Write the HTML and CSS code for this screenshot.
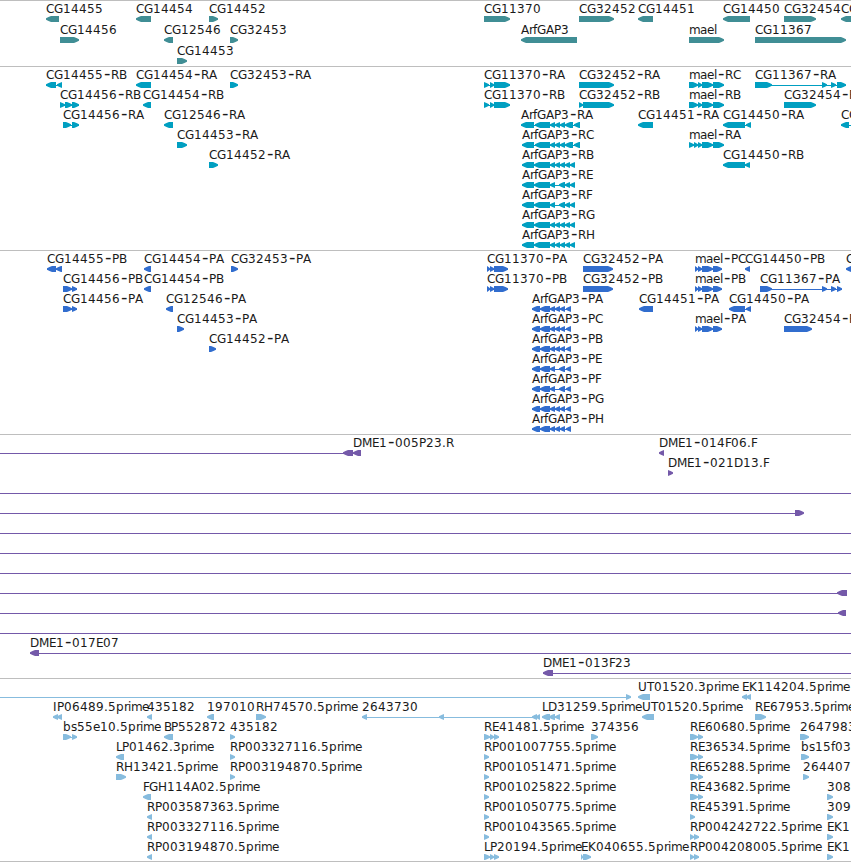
FILE: index.html
```html
<!DOCTYPE html>
<html lang="en">
  <head>
    <meta charset="UTF-8" />
    <meta name="viewport" content="width=device-width, initial-scale=1.0" />
    <title>Genome tracks</title>
    <link rel="stylesheet" href="styles.css">
  </head>
  <body>
    <main class="browser">
      <section class="track track--gene" data-track="gene"></section>
      <section class="track track--transcript" data-track="transcript"></section>
      <section class="track track--protein" data-track="protein"></section>
      <section class="track track--bac" data-track="bac"></section>
      <section class="track track--est" data-track="est"></section>
    </main>
    <script src="tracks.js"></script>
  </body>
</html>
```
FILE: styles.css
```css
:root {
  --color-line: #bebebe;
  --color-gene: #408e95;
  --color-transcript: #009fc1;
  --color-protein: #316dce;
  --color-bac: #7459a9;
  --color-est: #87bcde;
}
body {
  margin: 0;
  background: #fff;
  overflow: hidden;
}
.browser {
  display: flex;
  flex-direction: column;
  width: 851px;
}
.track {
  box-sizing: border-box;
  height: 184px;
  border-top: 1px solid var(--color-line);
  overflow: hidden;
}
.track svg {
  display: block;
  width: 100%;
  height: 100%;
}
.track--gene {
  height: 66px;
  fill: var(--color-gene);
}
.track--transcript {
  fill: var(--color-transcript);
}
.track--protein {
  fill: var(--color-protein);
}
.track--bac {
  height: 244px;
  fill: var(--color-bac);
}
.track--est {
  border-bottom: 1px solid var(--color-line);
  fill: var(--color-est);
}
.label {
  font-family: "DejaVu Sans", sans-serif;
  font-size: 12px;
  fill: #1a1a1a;
}
.label__dash {
  font-size: 18px;
}
```
FILE: tracks.js
```js
(function () {
  var SVG_NS = "http://www.w3.org/2000/svg";
  var VIEW_END = 851;

  // label advances, anything missing is 8px wide
  var ADVANCE = {
    G: 9, D: 9, H: 9, U: 9, M: 10, P: 7, B: 7, E: 7, F: 6, L: 6, T: 7, I: 4,
    a: 7, e: 7, f: 4, i: 3, l: 3, m: 11, r: 4, s: 6, ".": 4,
  };

  var mael = "689-698 698-702 702-713 713-724";
  var maelP = "695-698 698-702 702-713 713-722";
  var arfR = "522-534 534-550 550-555 555-560 560-565 565-570 570-575";
  var arfRShort = "522-534 534-550 550-555 559-565 565-570 570-575";
  var arfP = "532-540 540-550 550-555 555-560 560-565 566-571";
  var arfPShort = "532-540 540-550 550-555 559-565 566-571";

  // each feature: label, strand, exons, [line start, line end], label x
  var tracks = {
    gene: [
      [
        ["CG14455", "<", "46-59"],
        ["CG14454", "<", "136-151"],
        ["CG14452", ">", "209-218"],
        ["CG11370", ">", "484-510"],
        ["CG32452", ">", "579-614"],
        ["CG14451", "<", "638-653"],
        ["CG14450", "<", "723-750"],
        ["CG32454", ">", "784-816"],
        ["CG", "<", "841-860"],
      ],
      [
        ["CG14456", ">", "60-79"],
        ["CG12546", "<", "164-173"],
        ["CG32453", ">", "230-238"],
        ["ArfGAP3", "<", "521-577"],
        ["mael", ">", "689-724"],
        ["CG11367", ">", "755-846"],
      ],
      [["CG14453", ">", "177-187"]],
    ],
    transcript: [
      [
        ["CG14455-RB", "<", "46-56 57-62"],
        ["CG14454-RA", "<", "136-151"],
        ["CG32453-RA", ">", "230-238"],
        ["CG11370-RA", ">", "484-489 490-494 494-510"],
        ["CG32452-RA", ">", "579-614"],
        ["mael-RC", ">", mael],
        ["CG11367-RA", ">", "755-772 822-827 831-836 837-846"],
      ],
      [
        ["CG14456-RB", ">", "60-65 65-72 72-79"],
        ["CG14454-RB", "<", "143-151"],
        ["CG11370-RB", ">", "484-489 490-494 494-510"],
        ["CG32452-RB", ">", "579-583 583-614"],
        ["mael-RB", ">", mael],
        ["CG32454-R", ">", "784-816"],
      ],
      [
        ["CG14456-RA", ">", "63-71 72-79"],
        ["CG12546-RA", "<", "164-173"],
        ["ArfGAP3-RA", "<", "521-534 535-550 550-555 555-560 560-565 565-573 574-580"],
        ["CG14451-RA", "<", "638-653"],
        ["CG14450-RA", "<", "723-745 746-751"],
        ["CG", "<", "841-849", [841, VIEW_END]],
      ],
      [
        ["CG14453-RA", ">", "177-187"],
        ["ArfGAP3-RC", "<", "522-534 535-550 550-555 555-560 560-565 565-573 574-580"],
        ["mael-RA", ">", "689-694 694-698 698-702 702-713 713-724"],
      ],
      [
        ["CG14452-RA", ">", "209-218"],
        ["ArfGAP3-RB", "<", arfR],
        ["CG14450-RB", "<", "723-745 745-750"],
      ],
      [["ArfGAP3-RE", "<", arfRShort]],
      [["ArfGAP3-RF", "<", arfRShort]],
      [["ArfGAP3-RG", "<", arfR]],
      [["ArfGAP3-RH", "<", arfR]],
    ],
    protein: [
      [
        ["CG14455-PB", "<", "47-56 56-62"],
        ["CG14454-PA", "<", "144-151"],
        ["CG32453-PA", ">", "231-238"],
        ["CG11370-PA", ">", "487-490 490-494 494-508"],
        ["CG32452-PA", ">", "583-613"],
        ["mael-PC", ">", maelP],
        ["CG14450-PB", "<", "745-750"],
        ["C", "<", "846-856"],
      ],
      [
        ["CG14456-PB", ">", "63-72 72-77"],
        ["CG14454-PB", "<", "144-151"],
        ["CG11370-PB", ">", "487-490 490-494 494-508"],
        ["CG32452-PB", ">", "583-613"],
        ["mael-PB", ">", maelP],
        ["CG11367-PA", ">", "760-772 822-827 831-836 837-842"],
      ],
      [
        ["CG14456-PA", ">", "63-72 72-77"],
        ["CG12546-PA", "<", "166-173"],
        ["ArfGAP3-PA", "<", arfP],
        ["CG14451-PA", "<", "639-653"],
        ["CG14450-PA", "<", "729-745 746-751"],
      ],
      [
        ["CG14453-PA", ">", "177-184"],
        ["ArfGAP3-PC", "<", arfP],
        ["mael-PA", ">", maelP],
        ["CG32454-P", ">", "784-812"],
      ],
      [
        ["CG14452-PA", ">", "209-216"],
        ["ArfGAP3-PB", "<", arfP],
      ],
      [["ArfGAP3-PE", "<", arfPShort]],
      [["ArfGAP3-PF", "<", arfPShort]],
      [["ArfGAP3-PG", "<", arfP]],
      [["ArfGAP3-PH", "<", arfP]],
    ],
    bac: [
      [
        ["DME1-005P23.R", "<", "343-353 353-361", [0, 361], 353],
        ["DME1-014F06.F", "<", "659-664"],
      ],
      [["DME1-021D13.F", ">", "668-673"]],
      [["", "", "", [0, VIEW_END]]],
      [["", ">", "795-804", [0, 800]]],
      [["", "", "", [0, VIEW_END]]],
      [["", "", "", [0, VIEW_END]]],
      [["", "", "", [0, VIEW_END]]],
      [["", "<", "837-847", [0, 847]]],
      [["", "<", "838-846", [0, 846]]],
      [["", "", "", [0, VIEW_END]]],
      [["DME1-017E07", "<", "30-39", [30, VIEW_END]]],
      [["DME1-013F23", "<", "543-553", [543, VIEW_END]]],
    ],
    est: [
      [
        ["", ">", "626-631", [0, 631]],
        ["UT01520.3prime", "<", "638-650"],
        ["EK114204.5prime", "<", "742-747 746-751"],
      ],
      [
        ["IP06489.5prime", "<", "53-58 57-62"],
        ["435182", "<", "147-152"],
        ["197010", "<", "207-214"],
        ["RH74570.5prime", ">", "256-266"],
        ["2643730", "<", "362-367 439-444 532-537 536-540"],
        ["LD31259.5prime", "<", "542-550 549-555 555-560"],
        ["UT01520.5prime", "<", "642-654"],
        ["RE67953.5prime", ">", "755-766"],
      ],
      [
        ["bs55e10.5prime", ">", "63-71 72-77"],
        ["BP552872", "<", "164-173"],
        ["435182", ">", "230-235"],
        ["RE41481.5prime", ">", "484-490 490-494 494-499"],
        ["374356", ">", "591-598"],
        ["RE60680.5prime", ">", "690-698 698-703"],
        ["2647983", ">", "800-809"],
      ],
      [
        ["LP01462.3prime", "<", "116-124"],
        ["RP003327116.5prime", ">", "230-235"],
        ["RP001007755.5prime", ">", "484-489"],
        ["RE36534.5prime", ">", "690-698 698-703"],
        ["bs15f03", ">", "801-809"],
      ],
      [
        ["RH13421.5prime", ">", "116-126"],
        ["RP003194870.5prime", ">", "230-235"],
        ["RP001051471.5prime", ">", "484-489"],
        ["RE65288.5prime", ">", "690-698 698-703"],
        ["264407", ">", "803-809"],
      ],
      [
        ["FGH114A02.5prime", "<", "143-151"],
        ["RP001025822.5prime", ">", "484-489"],
        ["RE43682.5prime", ">", "690-698 698-703"],
        ["308", ">", "827-833"],
      ],
      [
        ["RP003587363.5prime", "<", "147-152"],
        ["RP001050775.5prime", ">", "484-489"],
        ["RE45391.5prime", ">", "690-695"],
        ["309", ">", "827-833"],
      ],
      [
        ["RP003327116.5prime", "<", "147-152"],
        ["RP001043565.5prime", ">", "484-489"],
        ["RP004242722.5prime", ">", "690-694 694-699"],
        ["EK1", ">", "827-833"],
      ],
      [
        ["RP003194870.5prime", "<", "147-152"],
        ["LP20194.5prime", ">", "484-490 490-494 494-499"],
        ["EK040655.5prime", ">", "581-583 583-591"],
        ["RP004208005.5prime", ">", "690-694 694-699"],
        ["EK1", ">", "827-833"],
      ],
    ],
  };

  function add(parent, tag, attrs) {
    var node = document.createElementNS(SVG_NS, tag);
    for (var key in attrs) node.setAttribute(key, attrs[key]);
    parent.appendChild(node);
    return node;
  }

  function drawArrow(svg, start, end, top, strand) {
    var right = strand === ">";
    var tip = right ? end : start;
    var base = right ? start : end;
    var back = right ? -1 : 1;
    var head = Math.min(end - start, 5);
    add(svg, "polygon", {
      points: [
        [base, top],
        [tip + back * head, top],
        [tip + back * head * 0.5, top + 1],
        [tip, top + 2.2],
        [tip, top + 3.8],
        [tip + back * head * 0.5, top + 5],
        [tip + back * head, top + 6],
        [base, top + 6],
      ].join(" "),
    });
  }

  function drawLabel(svg, text, x, y) {
    var xs = [];
    text.split("").forEach(function (ch) {
      // the dash sits in the middle of its cell
      xs.push(ch === "-" ? x + 1 : x);
      x += ADVANCE[ch] || 8;
    });
    var label = add(svg, "text", { class: "label", x: xs.join(" "), y: y });
    text.split("-").forEach(function (part, i) {
      if (i) add(label, "tspan", { class: "label__dash" }).textContent = "-";
      label.appendChild(document.createTextNode(part));
    });
  }

  document.querySelectorAll("[data-track]").forEach(function (section) {
    var name = section.dataset.track;
    var rowHeight = name === "gene" ? 21 : 20;
    var svg = add(section, "svg", {});
    tracks[name].forEach(function (row, i) {
      var top = i * rowHeight;
      row.forEach(function (feature) {
        var exons = feature[2].split(" ").filter(Boolean).map(function (exon) {
          return exon.split("-").map(Number);
        });
        var line = feature[3] || [exons[0][0], exons[exons.length - 1][1]];
        if (feature[3] || exons.length > 1) {
          add(svg, "rect", { x: line[0], y: top + 18, width: line[1] - line[0], height: 1 });
        }
        exons.forEach(function (exon) {
          drawArrow(svg, exon[0], exon[1], top + 15, feature[1]);
        });
        if (feature[0]) {
          drawLabel(svg, feature[0], feature[4] || exons[0][0], top + 12);
        }
      });
    });
  });
})();
```
